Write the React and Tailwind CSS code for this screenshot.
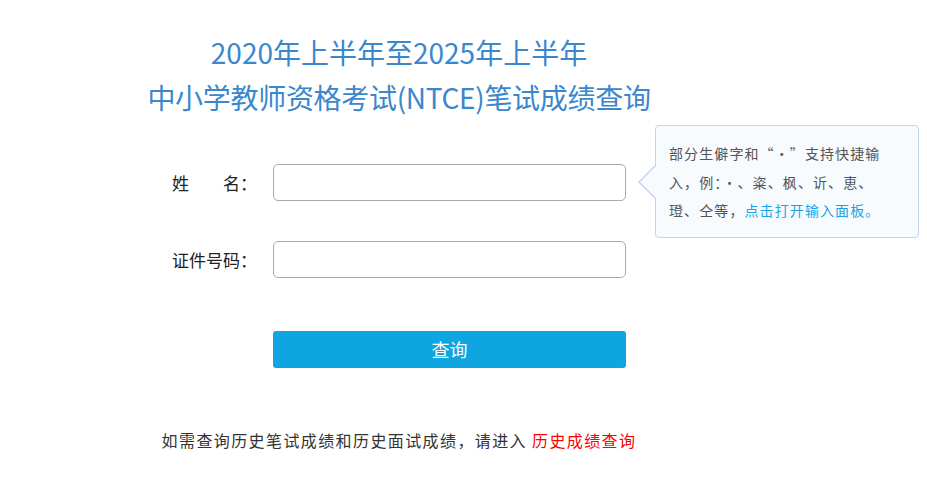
import React from "react";

const font = { fontFamily: '"Noto Sans CJK SC", "Noto Sans", sans-serif' };

function Field({ label, children }) {
  return (
    <div className="relative flex items-center">
      <div className="w-[101px] shrink-0 text-[17px] text-[#222] whitespace-pre">{label}</div>
      <input
        type="text"
        className="w-[353px] h-[37px] border border-[#a9a9a9] rounded-[5px] bg-white px-2 outline-none"
      />
      {children}
    </div>
  );
}

function Tip() {
  return (
    <div className="absolute left-[483px] top-[-39px] w-[264px] rounded-[4px] border border-[#c3d4ee] bg-[#f7fbfe] pl-[13px] pt-[13px] pb-[12px]">
      {/* arrow: border triangle with an inner fill triangle */}
      <div className="absolute left-[-18px] top-[39px] h-0 w-0 border-y-[17px] border-r-[17px] border-y-transparent border-r-[#c3d4ee]" />
      <div className="absolute left-[-16px] top-[39px] h-0 w-0 border-y-[17px] border-r-[17px] border-y-transparent border-r-[#f7fbfe]" />
      <div className="flex flex-col whitespace-nowrap text-[14px] leading-[28.5px] tracking-[1.1px] text-[#555]">
        <span>部分生僻字和“·”支持快捷输</span>
        <span>入，例：·、粢、枫、䜣、恵、</span>
        <div className="flex">
          <span>璒、仝等，</span>
          <span className="text-[#1ba3e6]">点击打开输入面板。</span>
        </div>
      </div>
    </div>
  );
}

export default function App() {
  return (
    <div className="min-h-[478px] w-[927px] bg-white" style={font}>
      <div className="ml-[172px] w-[454px] pt-[30px]">
        <h1 className="whitespace-nowrap flex flex-col items-center text-[28px] leading-[45px] font-normal text-[#3a87cd]">
          <span>2020年上半年至2025年上半年</span>
          <span className="tracking-[-0.3px]">中小学教师资格考试(NTCE)笔试成绩查询</span>
        </h1>

        <div className="mt-[44px] flex flex-col gap-[40px]">
          <Field label={"姓　　名："}>
            <Tip />
          </Field>
          <Field label="证件号码：" />
        </div>

        <div className="mt-[53px] ml-[101px]">
          <button className="w-[353px] h-[37px] rounded-[3px] bg-[#0ea5e1] text-[18px] text-white">
            查询
          </button>
        </div>

        <div className="mt-[60px] flex justify-center whitespace-nowrap text-[16px] tracking-[1.4px] text-[#333]">
          <span>如需查询历史笔试成绩和历史面试成绩，请进入&nbsp;</span>
          <span className="text-[#ff0000]">历史成绩查询</span>
        </div>
      </div>
    </div>
  );
}
